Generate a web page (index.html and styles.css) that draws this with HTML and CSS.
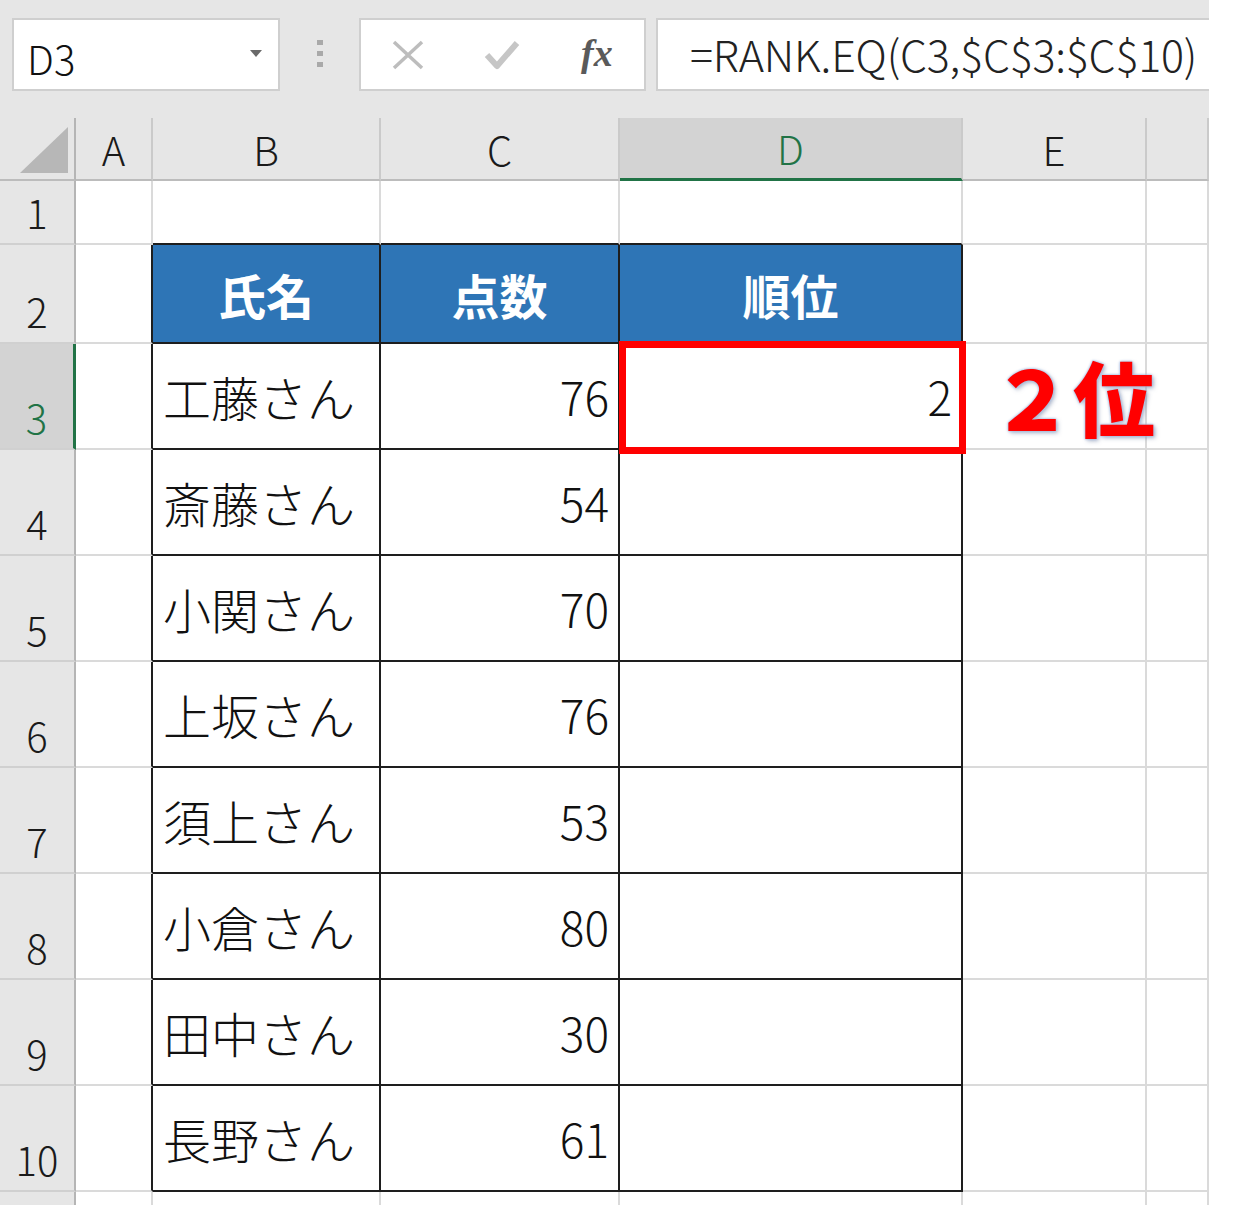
FILE: index.html
```html
<!DOCTYPE html>
<html lang="ja">
  <head>
    <meta charset="UTF-8" />
    <title>RANK.EQ</title>
    <link rel="stylesheet" href="styles.css">
  </head>
  <body>
    <div class="app">
      <!-- 名前ボックスと数式バー -->
      <div class="toolbar">
        <div class="namebox">
          <span>D3</span>
          <svg class="drop" width="12" height="7" viewBox="0 0 12 7"><path d="M0 0h12L6 7z" fill="#6a6a6a"/></svg>
        </div>
        <div class="grip"><i></i><i></i><i></i></div>
        <div class="fbtns">
          <span class="fbtn">
            <svg width="34" height="32" viewBox="0 0 34 32"><path d="M3 3L31 29M31 3L3 29" stroke="#bdbdbd" stroke-width="3.5" fill="none"/></svg>
          </span>
          <span class="fbtn">
            <svg width="36" height="32" viewBox="0 0 36 32"><path d="M3 16L13 27L33 4" stroke="#c6c6c6" stroke-width="6" fill="none" stroke-linejoin="round"/></svg>
          </span>
          <span class="fbtn fx">fx</span>
        </div>
        <div class="formula">=RANK.EQ(C3,$C$3:$C$10)</div>
      </div>

      <!-- シート -->
      <div class="sheet">
        <div class="ch corner"><svg width="50" height="48" viewBox="0 0 50 48"><path d="M0 46H48V0z" fill="#b7b7b7"/></svg></div>
        <div class="ch">A</div>
        <div class="ch">B</div>
        <div class="ch">C</div>
        <div class="ch sel">D</div>
        <div class="ch">E</div>
        <div class="ch"></div>

        <div class="rh">1</div>
        <div class="c"></div>
        <div class="c top"></div>
        <div class="c top"></div>
        <div class="c top"></div>
        <div class="c"></div>
        <div class="c"></div>

        <div class="rh">2</div>
        <div class="c left"></div>
        <div class="c t th">氏名</div>
        <div class="c t th">点数</div>
        <div class="c t th">順位</div>
        <div class="c"></div>
        <div class="c"></div>

        <div class="rh sel">3</div>
        <div class="c left"></div>
        <div class="c t name">工藤さん</div>
        <div class="c t num">76</div>
        <div class="c t num mark">2</div>
        <div class="c"><span class="note">２位</span></div>
        <div class="c"></div>

        <div class="rh">4</div>
        <div class="c left"></div>
        <div class="c t name">斎藤さん</div>
        <div class="c t num">54</div>
        <div class="c t num"></div>
        <div class="c"></div>
        <div class="c"></div>

        <div class="rh">5</div>
        <div class="c left"></div>
        <div class="c t name">小関さん</div>
        <div class="c t num">70</div>
        <div class="c t num"></div>
        <div class="c"></div>
        <div class="c"></div>

        <div class="rh">6</div>
        <div class="c left"></div>
        <div class="c t name">上坂さん</div>
        <div class="c t num">76</div>
        <div class="c t num"></div>
        <div class="c"></div>
        <div class="c"></div>

        <div class="rh">7</div>
        <div class="c left"></div>
        <div class="c t name">須上さん</div>
        <div class="c t num">53</div>
        <div class="c t num"></div>
        <div class="c"></div>
        <div class="c"></div>

        <div class="rh">8</div>
        <div class="c left"></div>
        <div class="c t name">小倉さん</div>
        <div class="c t num">80</div>
        <div class="c t num"></div>
        <div class="c"></div>
        <div class="c"></div>

        <div class="rh">9</div>
        <div class="c left"></div>
        <div class="c t name">田中さん</div>
        <div class="c t num">30</div>
        <div class="c t num"></div>
        <div class="c"></div>
        <div class="c"></div>

        <div class="rh">10</div>
        <div class="c left"></div>
        <div class="c t name">長野さん</div>
        <div class="c t num">61</div>
        <div class="c t num"></div>
        <div class="c"></div>
        <div class="c"></div>

        <div class="rh"></div>
        <div class="c"></div>
        <div class="c"></div>
        <div class="c"></div>
        <div class="c"></div>
        <div class="c"></div>
        <div class="c"></div>
      </div>
    </div>
  </body>
</html>
```

FILE: styles.css
```css
/* 全体 */
body {
  margin: 0;
  background: #fff;
  font-family: "Noto Sans CJK JP", "Noto Sans", sans-serif;
  font-weight: 300;
  color: #111;
}

.app {
  width: 1209px;
  height: 1205px;
  overflow: hidden;
}

/* 上部のバー */
.toolbar {
  height: 118px;
  box-sizing: border-box;
  padding: 18px 0 0 12px;
  background: #e6e6e6;
  display: flex;
  align-items: flex-start;
}

.namebox,
.fbtns,
.formula {
  height: 73px;
  box-sizing: border-box;
  background: #fff;
  border: 2px solid #cfcfcf;
}

.namebox {
  width: 268px;
  display: flex;
  align-items: center;
  justify-content: space-between;
  padding: 6px 16px 0 13px;
  font-size: 40px;
}

.namebox .drop {
  margin-bottom: 8px;
}

.grip {
  width: 6px;
  margin: 22px 36px 0 37px;
  display: flex;
  flex-direction: column;
  gap: 6px;
}

.grip i {
  display: block;
  width: 6px;
  height: 5px;
  background: #a9a9a9;
}

.fbtns {
  width: 287px;
  display: flex;
  align-items: center;
}

.fbtn {
  width: 96px;
  display: flex;
  justify-content: center;
}

.fx {
  font-family: "Liberation Serif", serif;
  font-style: italic;
  font-weight: bold;
  font-size: 38px;
  color: #5a5a5a;
  margin-top: -4px;
}

.formula {
  flex: 1;
  margin-left: 10px;
  border-right: 0;
  padding: 0 0 4px 32px;
  display: flex;
  align-items: center;
  font-size: 43px;
  letter-spacing: -0.2px;
  color: #222;
  white-space: nowrap;
}

/* シートのグリッド */
.sheet {
  display: grid;
  grid-template-columns: 76px 77px 228px 239px 343px 184px 62px;
  grid-template-rows: 63px 64px 99px repeat(8, 106px) 30px;
}

.sheet > div {
  box-sizing: border-box;
}

/* 列見出し */
.ch {
  background: #e6e6e6;
  border-right: 2px solid #cacaca;
  border-bottom: 2px solid #bcbcbc;
  display: flex;
  align-items: center;
  justify-content: center;
  font-size: 40px;
  line-height: 1;
  color: #1a1a1a;
}

.ch.corner {
  border-right-color: #b5b5b5;
  justify-content: flex-start;
  align-items: flex-end;
  padding: 0 0 4px 20px;
}

.ch.sel {
  background: #d3d3d3;
  color: #217346;
  border-bottom: 3px solid #217346;
}

/* 行見出し */
.rh {
  background: #e6e6e6;
  border-right: 2px solid #b5b5b5;
  border-bottom: 2px solid #d0d0d0;
  display: flex;
  align-items: flex-end;
  justify-content: center;
  padding-bottom: 11px;
  font-size: 40px;
  line-height: 40px;
  color: #1a1a1a;
}

.rh.sel {
  background: #d3d3d3;
  color: #217346;
  border-right: 3px solid #217346;
}

/* セル */
.c {
  border-right: 2px solid #dadada;
  border-bottom: 2px solid #dadada;
  display: flex;
  align-items: center;
  font-size: 48px;
  line-height: 1;
  white-space: nowrap;
}

.c.top {
  border-bottom-color: #1e1e1e;
}

.c.left {
  border-right-color: #1e1e1e;
}

.c.t {
  border-right-color: #1e1e1e;
  border-bottom-color: #1e1e1e;
}

.th {
  background: #2e75b6;
  color: #fff;
  font-weight: bold;
  justify-content: center;
}

.name {
  padding-left: 10px;
}

.num {
  justify-content: flex-end;
  padding-right: 9px;
  font-size: 46px;
}

/* D3の赤枠 */
.mark {
  position: relative;
}

.mark::after {
  content: "";
  position: absolute;
  top: -3px;
  left: -1px;
  right: -5px;
  bottom: -6px;
  border: 7px solid #ff0000;
}

/* 「2位」の注釈 */
.note {
  position: relative;
  z-index: 1;
  margin-left: 28px;
  font-size: 82px;
  font-weight: 900;
  color: #ff0000;
  text-shadow: 0 0 2px #a9bfe3, 0 0 3px #a9bfe3, 2px 2px 4px rgba(90, 110, 150, 0.5);
}
```
